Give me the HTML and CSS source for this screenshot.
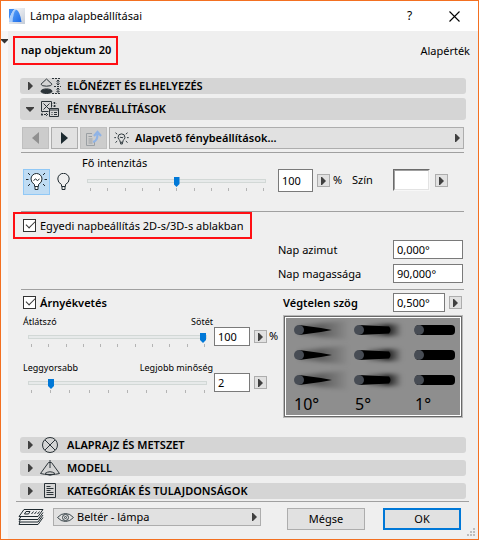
FILE: index.html
```html
<!DOCTYPE html>
<html lang="hu">
<head>
    <meta charset="UTF-8">
    <meta name="viewport" content="width=device-width, initial-scale=1.0">
    <title>Lámpa alapbeállításai</title>
    <link rel="stylesheet" href="styles.css">
</head>
<body>
    <div class="dialog">
        <header class="titlebar">
            <svg class="app-icon" width="16" height="16" viewBox="0 0 16 16">
                <defs>
                    <linearGradient id="sheet" x1="0" y1="0" x2="1" y2="1">
                        <stop offset="0" stop-color="#ffffff"/>
                        <stop offset="1" stop-color="#c4ccd8"/>
                    </linearGradient>
                    <linearGradient id="sail" x1="0" y1="0" x2="1" y2="1">
                        <stop offset="0" stop-color="#5aa2f8"/>
                        <stop offset="1" stop-color="#1c6be8"/>
                    </linearGradient>
                </defs>
                <rect width="16" height="16" fill="url(#sheet)"/>
                <path d="M0 1h5.500Q2 5 0 12z" fill="#3d8af2"/>
                <path d="M0 14Q1.500 5 5.500 1q1 0 1.500 1Q4 7 3.500 14z" fill="#a9cdfb"/>
                <path d="M3.500 14Q4 5 7 1.500 11 3 12.500 14z" fill="url(#sail)"/>
            </svg>
            <h1>Lámpa alapbeállításai</h1>
            <button type="button" class="title-btn" aria-label="Súgó">?</button>
            <button type="button" class="title-btn" aria-label="Bezárás">
                <svg width="11" height="11" viewBox="0 0 11 11"><path d="M.5.5l10 10M10.500.5l-10 10" stroke="#000" stroke-width="1.100"/></svg>
            </button>
        </header>

        <form class="body">
            <svg class="fold" width="7" height="5" viewBox="0 0 7 5"><path d="M0 0h7v1L3.500 4.500 0 1z" fill="#333"/></svg>

            <div class="object-head">
                <strong class="object-name marked">nap objektum 20</strong>
                <span>Alapérték</span>
            </div>

            <div class="panels">
                <button type="button" class="panel-bar">
                    <svg class="arrow" width="5" height="8" viewBox="0 0 5 8"><path d="M0 0h1l4 4-4 4H0z"/></svg>
                    <svg class="panel-icon" width="22" height="16" viewBox="0 0 22 16" fill="none" stroke="#2b3338">
                        <path d="M6.500 1L1 6.200q0 2 5.500 2t5.500-2z"/>
                        <ellipse cx="6.500" cy="13.200" rx="5.500" ry="2.300" fill="#2b3338"/>
                        <path d="M12 .5h9M14 8.500h7M12 15.500h9" stroke-dasharray="2 1"/>
                        <path d="M18 2v5M18 10v4M16.500 3.500L18 2l1.500 1.500M16.500 5.500L18 7l1.500-1.500M16.500 11.500L18 10l1.500 1.500M16.500 13L18 14.500l1.500-1.500"/>
                    </svg>
                    <span>ELŐNÉZET ÉS ELHELYEZÉS</span>
                </button>

                <button type="button" class="panel-bar open" aria-expanded="true">
                    <svg class="arrow down" width="8" height="5" viewBox="0 0 8 5"><path d="M0 0h8v1L4 5 0 1z"/></svg>
                    <svg class="panel-icon" width="22" height="17" viewBox="0 0 22 17" fill="none" stroke="#2b3338">
                        <path d="M11.500 6.500v-6h-10v10h7M3.500 2.500l6 6M9.500 2.500l-6 6"/>
                        <path d="M14.500 1v5M13 2.500L14.500 1 16 2.500M13 4.500L14.500 6 16 4.500M1 13.500h7M2.500 12L1 13.500 2.500 15M6 12l1.500 1.500L6 15" stroke-dasharray="2 1"/>
                        <path d="M9.500 7.500h9v8h-9zM9.500 9h9M11.500 11.500h1M14 11.500h3M11.500 13.500h1M14 13.500h3"/>
                    </svg>
                    <span>FÉNYBEÁLLÍTÁSOK</span>
                </button>

                <div class="settings">
                    <div class="toolbar">
                        <button type="button" class="tool" disabled aria-label="Előző oldal">
                            <svg width="7" height="12" viewBox="0 0 7 12"><path d="M7 0v12L0 6z" fill="#909090"/></svg>
                        </button>
                        <button type="button" class="tool" aria-label="Következő oldal">
                            <svg width="7" height="12" viewBox="0 0 7 12"><path d="M0 0v12l7-6z" fill="#1c2a30"/></svg>
                        </button>
                        <button type="button" class="tool" disabled aria-label="Oldal megnyitása">
                            <svg width="17" height="16" viewBox="0 0 17 16" fill="none">
                                <path d="M7 3.500H1.500v12h8V11M3.500 6.500H7M3.500 9h4M3.500 11h4M3.500 13h4" stroke="#9a9fa3"/>
                                <path d="M8 12q4.500-1 4.500-8M9 6l3.500-4L16 6" stroke="#8fb3e6" stroke-width="2.200"/>
                            </svg>
                        </button>
                        <div class="picker page-picker">
                            <svg class="picker-icon" width="17" height="15" viewBox="0 0 27 26" fill="none" stroke="#1f2a30" stroke-width="1.600">
                                <path d="M11 19.500v-3q-3.500-2-3.500-5.500a6 6 0 0 1 12 0q0 3.500-3.500 5.500v3zM12 20v2.500h3V20M10.500 12l2-1.500 2 1.500 2-1.500M1 11.500h3M23 11.500h3M3 3l3 2.500M24 3l-3 2.500M3 20l3-2.500M24 20l-3-2.500"/>
                            </svg>
                            <select aria-label="Beállítási oldal">
                                <option>Alapvető fénybeállítások...</option>
                            </select>
                            <svg class="arrow" width="5" height="8" viewBox="0 0 5 8"><path d="M0 0h1l4 4-4 4H0z"/></svg>
                        </div>
                    </div>

                    <div class="group intensity">
                        <button type="button" class="bulb on" aria-pressed="true" aria-label="Világítás be">
                            <svg width="21" height="20" viewBox="0 0 21 20" fill="none" stroke="#1f2a30">
                                <path fill="#fff" d="M8.500 14.500v-2Q5 10.500 5 7a5.500 5.500 0 0 1 11 0q0 3.500-3.500 5.500v2zM9 15v2.500h3V15"/>
                                <path d="M7.500 8.500l2-1.500 2 1.500 2-1.500M0 7.500h2.500M18.500 7.500H21M2 1l2 2M19 1l-2 2M2 14l2-2M19 14l-2-2"/>
                            </svg>
                        </button>
                        <button type="button" class="bulb" aria-pressed="false" aria-label="Világítás ki">
                            <svg width="13" height="18" viewBox="0 0 13 18" fill="none" stroke="#1f2a30">
                                <path d="M4.500 13.500v-2Q.8 9.500.8 6a5.700 5.700 0 0 1 11.400 0q0 3.500-3.700 5.500v2zM5 14v2.500h3V14"/>
                            </svg>
                        </button>
                        <div class="slider-col">
                            <label for="intensity">Fő intenzitás</label>
                            <input type="range" id="intensity" min="0" max="200" value="100">
                            <div class="ticks"><i></i><i></i><i></i><i></i><i></i><i></i><i></i><i></i><i></i><i></i><i></i></div>
                        </div>
                        <input type="text" class="field tall" value="100" aria-label="Fő intenzitás értéke">
                        <button type="button" class="more" aria-label="Egység"><svg class="arrow" width="5" height="8" viewBox="0 0 5 8"><path d="M0 0h1l4 4-4 4H0z"/></svg></button>
                        <span class="unit">%</span>
                        <label class="color-label" for="lampcolor">Szín</label>
                        <input type="color" id="lampcolor" class="swatch" value="#ffffff">
                        <button type="button" class="more" aria-label="Szín választása"><svg class="arrow" width="5" height="8" viewBox="0 0 5 8"><path d="M0 0h1l4 4-4 4H0z"/></svg></button>
                    </div>

                    <div class="group sun">
                        <label class="check marked"><input type="checkbox" checked>Egyedi napbeállítás 2D-s/3D-s ablakban</label>
                        <div class="sun-fields">
                            <label for="azimuth">Nap azimut</label>
                            <input type="text" class="field" id="azimuth" value="0,000°">
                            <label for="altitude">Nap magassága</label>
                            <input type="text" class="field" id="altitude" value="90,000°">
                        </div>
                    </div>

                    <div class="group shadow">
                        <div class="shadow-left">
                            <label class="check bold"><input type="checkbox" checked>Árnyékvetés</label>
                            <div class="level">
                                <div class="level-slider">
                                    <div class="ends"><span>Átlátszó</span><span>Sötét</span></div>
                                    <input type="range" min="0" max="100" value="100" aria-label="Árnyék sötétsége">
                                    <div class="ticks"><i></i><i></i><i></i><i></i><i></i><i></i><i></i><i></i><i></i><i></i><i></i></div>
                                </div>
                                <input type="text" class="field" value="100" aria-label="Árnyék sötétsége százalékban">
                                <button type="button" class="more" aria-label="Egység"><svg class="arrow" width="5" height="8" viewBox="0 0 5 8"><path d="M0 0h1l4 4-4 4H0z"/></svg></button>
                                <span class="unit">%</span>
                            </div>
                            <div class="level">
                                <div class="level-slider">
                                    <div class="ends"><span>Leggyorsabb</span><span>Legjobb minőség</span></div>
                                    <input type="range" min="1" max="10" value="2" aria-label="Árnyék minősége">
                                    <div class="ticks"><i></i><i></i><i></i><i></i><i></i><i></i><i></i><i></i><i></i><i></i></div>
                                </div>
                                <input type="text" class="field" value="2" aria-label="Árnyék minőségének értéke">
                                <button type="button" class="more" aria-label="Egység"><svg class="arrow" width="5" height="8" viewBox="0 0 5 8"><path d="M0 0h1l4 4-4 4H0z"/></svg></button>
                                <span class="unit"></span>
                            </div>
                        </div>

                        <div class="shadow-right">
                            <div class="angle">
                                <label for="angle">Végtelen szög</label>
                                <input type="text" class="field" id="angle" value="0,500°">
                                <button type="button" class="more" aria-label="Szög választása"><svg class="arrow" width="5" height="8" viewBox="0 0 5 8"><path d="M0 0h1l4 4-4 4H0z"/></svg></button>
                            </div>
                            <div class="preview">
                                <svg viewBox="0 0 174 97" role="img" aria-label="Árnyék 10, 5 és 1 fokos szögnél">
                                    <defs>
                                        <linearGradient id="fan">
                                            <stop offset="0" stop-color="#000" stop-opacity=".3"/>
                                            <stop offset=".45" stop-color="#000" stop-opacity=".35"/>
                                            <stop offset="1" stop-color="#000" stop-opacity="0"/>
                                        </linearGradient>
                                        <linearGradient id="tail">
                                            <stop offset="0" stop-color="#000" stop-opacity=".2"/>
                                            <stop offset=".6" stop-color="#000" stop-opacity=".8"/>
                                            <stop offset="1" stop-color="#000" stop-opacity="0"/>
                                        </linearGradient>
                                        <filter id="soft" x="-20%" y="-60%" width="140%" height="220%"><feGaussianBlur stdDeviation="2"/></filter>
                                        <filter id="edge" x="-20%" y="-60%" width="140%" height="220%"><feGaussianBlur stdDeviation=".6"/></filter>
                                        <g id="s10">
                                            <path d="M0-4L50-10V10L0 4z" fill="url(#fan)" filter="url(#soft)"/>
                                            <path d="M0-5L22-2 33 0 22 2 0 5z" filter="url(#edge)"/>
                                            <circle r="5" fill="#474c54"/>
                                        </g>
                                        <g id="s5">
                                            <path d="M8-5L43-6V6L8 5z" fill="url(#tail)" filter="url(#soft)"/>
                                            <path d="M0-5L30-3.500Q33 0 30 3.500L0 5z" filter="url(#edge)"/>
                                            <circle r="5" fill="#474c54"/>
                                        </g>
                                        <g id="s1">
                                            <rect x="-4" y="-5" width="40" height="10" rx="4" filter="url(#edge)"/>
                                            <circle r="5" fill="#474c54"/>
                                        </g>
                                    </defs>
                                    <rect width="174" height="97" fill="#8e8e8e"/>
                                    <use href="#s10" x="13" y="12"/><use href="#s10" x="13" y="37"/><use href="#s10" x="13" y="62"/>
                                    <use href="#s5" x="73" y="12"/><use href="#s5" x="73" y="37"/><use href="#s5" x="73" y="62"/>
                                    <use href="#s1" x="133" y="12"/><use href="#s1" x="133" y="37"/><use href="#s1" x="133" y="62"/>
                                    <text x="8" y="92">10°</text>
                                    <text x="69" y="92">5°</text>
                                    <text x="129" y="92">1°</text>
                                </svg>
                            </div>
                        </div>
                    </div>
                </div>

                <div class="closed-panels">
                    <button type="button" class="panel-bar">
                        <svg class="arrow" width="5" height="8" viewBox="0 0 5 8"><path d="M0 0h1l4 4-4 4H0z"/></svg>
                        <svg class="panel-icon" width="22" height="16" viewBox="0 0 22 16" fill="none" stroke="#2b3338">
                            <circle cx="10" cy="8" r="7.500"/><path d="M5 3l10 10M15 3L5 13"/>
                        </svg>
                        <span>ALAPRAJZ ÉS METSZET</span>
                    </button>
                    <button type="button" class="panel-bar">
                        <svg class="arrow" width="5" height="8" viewBox="0 0 5 8"><path d="M0 0h1l4 4-4 4H0z"/></svg>
                        <svg class="panel-icon" width="22" height="16" viewBox="0 0 22 16" fill="none" stroke="#2b3338">
                            <path d="M10 0v3M8.500 2.500h3L19.500 13.500q-3 1-9.500 1t-9.500-1zM10 3v5M5 13.500q5-3.500 10 0M5 14q5 2.500 10 0"/>
                        </svg>
                        <span>MODELL</span>
                    </button>
                    <button type="button" class="panel-bar">
                        <svg class="arrow" width="5" height="8" viewBox="0 0 5 8"><path d="M0 0h1l4 4-4 4H0z"/></svg>
                        <svg class="panel-icon" width="22" height="16" viewBox="0 0 22 16" fill="none" stroke="#2b3338">
                            <path d="M4.500.5h11v14h-11zM6.500 3.500h4M6.500 5.500h7M6.500 7.500h4M6.500 9.500h7M6.500 11.500h7"/>
                        </svg>
                        <span>KATEGÓRIÁK ÉS TULAJDONSÁGOK</span>
                    </button>
                </div>
            </div>

            <footer class="footer">
                <svg class="layers" width="26" height="16" viewBox="0 0 26 16" fill="none" stroke="#1f2a30">
                    <path d="M6 .5h19l-5 7H1zM3 7.500L1 10.500h19l5-7M2.500 10.500L1 13h19l5-7M2 13l-1 2.500h19l5-7"/>
                    <path d="M8 2.500h4l-1.500 2.500h-4zM15.500 2.500l-2 2.500M18.500 2.500l-2 2.500M21.500 2.500l-2 2.500"/>
                </svg>
                <div class="picker layer-picker">
                    <svg class="picker-icon" width="17" height="9" viewBox="0 0 17 9" fill="none" stroke="#3b464b">
                        <path d="M.5 4.500Q4 .5 8.500.5t8 4q-3.500 4-8 4t-8-4z"/><circle cx="8.500" cy="4.500" r="3"/><circle cx="8.500" cy="4.500" r="1"/>
                    </svg>
                    <select aria-label="Fólia">
                        <option>Beltér - lámpa</option>
                    </select>
                    <svg class="arrow" width="5" height="8" viewBox="0 0 5 8"><path d="M0 0h1l4 4-4 4H0z"/></svg>
                </div>
                <button type="button" class="btn">Mégse</button>
                <button type="submit" class="btn primary">OK</button>
            </footer>

            <svg class="grip" width="8" height="8" viewBox="0 0 8 8"><path d="M6 0h2v2H6zM3 3h2v2H3zM6 3h2v2H6zM0 6h2v2H0zM3 6h2v2H3zM6 6h2v2H6z" fill="#bdbdbd"/></svg>
        </form>
    </div>
</body>
</html>
```
FILE: styles.css
```css
* {
    margin: 0;
    padding: 0;
    box-sizing: border-box;
}

body {
    font-family: "Noto Sans", "Open Sans", sans-serif;
    font-size: 11px;
    line-height: 16px;
    color: #000;
    background: #efefef;
}

button,
input,
select {
    font: inherit;
    color: inherit;
    border-radius: 0;
}

svg {
    display: block;
    flex: none;
}

.dialog {
    display: flex;
    flex-direction: column;
    min-height: 100vh;
    border: 1px solid #f37021;
}

/* Title bar */
.titlebar {
    display: flex;
    align-items: center;
    height: 30px;
    padding: 0 1px 0 8px;
    background: #fff;
}

.titlebar h1 {
    flex: 1;
    margin-left: 5px;
    font-size: 11px;
    font-weight: 400;
}

.title-btn {
    display: flex;
    align-items: center;
    justify-content: center;
    width: 45px;
    height: 30px;
    border: none;
    background: none;
    font-size: 12px;
}

/* Body */
.body {
    position: relative;
    flex: 1;
    border-left: 7px solid #f7f7f7;
    background: #efefef;
}

.fold {
    position: absolute;
    top: 8px;
    left: -7px;
}

.marked {
    border: 2px solid #ff0f14;
}

.object-head {
    display: flex;
    align-items: center;
    justify-content: space-between;
    margin: 5px 8px 13px 5px;
}

.object-name {
    padding: 4px 5px 5px 6px;
    font-weight: 600;
}

.panels {
    padding: 0 12px;
}

.panel-bar {
    display: flex;
    align-items: center;
    width: 100%;
    height: 16px;
    margin-bottom: 4px;
    padding-left: 8px;
    border: none;
    border-radius: 3px;
    background: #d5d5d5;
    font-weight: 600;
    text-align: left;
}

.panel-bar.open {
    height: 22px;
    margin-bottom: 7px;
}

.panel-bar .panel-icon {
    margin: 0 5px 0 7px;
}

.arrow {
    fill: #404040;
}

.panel-bar .arrow {
    width: 5px;
}

.panel-bar .arrow.down {
    width: 8px;
    margin: 0 -1px 0 -2px;
}

.settings {
    padding: 0 2px 0 1px;
}

/* Page toolbar */
.toolbar {
    display: flex;
    gap: 2px;
    margin: 0 0 3px 1px;
}

.tool {
    display: flex;
    align-items: center;
    justify-content: center;
    width: 27px;
    height: 22px;
    border: 1px solid #adadad;
    background: #e1e1e1;
}

.tool:disabled {
    border-color: #bfbfbf;
    background: #cccccc;
}

.picker {
    position: relative;
    flex: 1;
}

.picker select {
    display: block;
    width: 100%;
    height: 22px;
    border: 1px solid #adadad;
    background: #e1e1e1;
    appearance: none;
}

.picker-icon,
.picker .arrow {
    position: absolute;
    top: 0;
    bottom: 0;
    left: 4px;
    margin: auto 0;
    pointer-events: none;
}

.picker .arrow {
    left: auto;
    right: 4px;
}

.page-picker select {
    padding-left: 25px;
    font-weight: 600;
}

/* Setting groups */
.group {
    border-top: 1px solid #a0a0a0;
}

.field {
    height: 19px;
    padding: 0 3px;
    border: 1px solid #7a7a7a;
    background: #fff;
}

.field.tall {
    width: 35px;
    height: 23px;
}

.more {
    display: flex;
    align-items: center;
    justify-content: center;
    width: 13px;
    height: 13px;
    border: 1px solid #adadad;
    background: #e1e1e1;
}

input[type="range"] {
    display: block;
    height: 10px;
    background: none;
    appearance: none;
}

input[type="range"]::-webkit-slider-runnable-track {
    height: 4px;
    border: 1px solid #d2d8d6;
    background: #e7eaea;
}

input[type="range"]::-webkit-slider-thumb {
    width: 6px;
    height: 10px;
    margin-top: -3px;
    background: #0078d7;
    clip-path: polygon(0 0, 100% 0, 100% 70%, 50% 100%, 0 70%);
    appearance: none;
}

.ticks {
    display: flex;
    justify-content: space-between;
    padding: 0 2px 0 3px;
}

.ticks i {
    width: 1px;
    height: 3px;
    background: #b4b4b4;
}

.intensity {
    display: flex;
    align-items: flex-start;
    height: 59px;
    padding: 16px 0 0 2px;
}

.bulb {
    display: flex;
    align-items: center;
    justify-content: center;
    width: 27px;
    height: 26px;
    border: 1px solid transparent;
    background: none;
}

.bulb.on {
    border-color: #90c8f6;
    background: #c0dcf3;
}

.slider-col {
    flex: 1;
    margin: -14px 12px 0 10px;
}

.slider-col label {
    display: block;
    margin-left: -5px;
}

.slider-col input {
    width: 100%;
    margin: 5px 0 2px;
}

.intensity .more {
    margin: 5px 0 0 4px;
}

.unit {
    width: 14px;
    margin-left: 3px;
}

.intensity .unit,
.color-label {
    margin-top: 3px;
}

.color-label {
    width: 41px;
    margin-left: 5px;
}

.swatch {
    width: 37px;
    height: 22px;
    border: 1px solid;
    border-color: #6b6b6b #f7f7f7 #f7f7f7 #6b6b6b;
    background: #fff;
    appearance: none;
}

.swatch::-webkit-color-swatch-wrapper {
    padding: 0;
}

.swatch::-webkit-color-swatch {
    border: 1px solid;
    border-color: #a0a0a0 #e3e3e3 #e3e3e3 #a0a0a0;
}

.intensity .swatch + .more {
    margin: 5px 16px 0 5px;
}

.check {
    display: flex;
    align-items: center;
    gap: 4px;
}

.check input {
    position: relative;
    width: 13px;
    height: 13px;
    border: 1px solid #333;
    background: #fff;
    appearance: none;
}

.check input:checked::after {
    content: "";
    position: absolute;
    left: 2px;
    top: 1px;
    width: 8px;
    height: 4px;
    border: solid #333;
    border-width: 0 0 1px 1px;
    transform: rotate(-45deg);
}

.bold {
    font-weight: 600;
}

/* Sun */
.sun .check {
    width: fit-content;
    height: 27px;
    margin-left: -8px;
    padding: 0 6px 0 8px;
}

.sun-fields {
    display: grid;
    grid-template-columns: 115px 70px;
    justify-content: end;
    align-items: center;
    gap: 5px 0;
    padding: 1px 1px 6px 0;
}

.sun-fields .field {
    width: 100%;
}

/* Shadow */
.shadow {
    display: flex;
    padding: 3px 1px 19px 2px;
}

.shadow-left {
    flex: 1;
    display: flex;
    flex-direction: column;
}

.shadow-left .check {
    height: 19px;
    margin-bottom: 3px;
}

.level {
    display: flex;
    align-items: flex-start;
    height: 46px;
}

.level-slider {
    flex: 1;
    margin-right: 1px;
}

.level-slider input {
    width: calc(100% - 11px);
    margin: 4px 6px 2px 5px;
}

.level-slider .ticks {
    margin: 0 6px 0 5px;
}

.ends {
    display: flex;
    justify-content: space-between;
    font-size: 9px;
    line-height: 13px;
}

.level .field {
    width: 36px;
    margin-top: 12px;
}

.level .more {
    margin: 15px 0 0 4px;
}

.level .unit {
    margin: 13px 0 0 2px;
}

.shadow-right {
    width: 180px;
}

.angle {
    display: flex;
    align-items: center;
    margin-bottom: 3px;
}

.angle label {
    flex: 1;
    font-weight: 600;
}

.angle .field {
    width: 52px;
}

.angle .more {
    margin: 0 1px 0 4px;
}

.preview {
    padding: 1px;
    border: 1px solid #b9b9b9;
    background: #696969;
}

.preview svg {
    width: 100%;
    height: auto;
    border: 1px solid #fff;
}

.preview text {
    font-size: 16px;
}

.closed-panels .panel-bar {
    margin-bottom: 7px;
}

.closed-panels .panel-bar:last-child {
    margin-bottom: 2px;
}

/* Footer */
.footer {
    display: flex;
    align-items: flex-start;
    margin: 0 9px 0 8px;
    padding: 6px 8px 9px 2px;
    border-top: 1px solid #a0a0a0;
}

.layers {
    margin-top: 1px;
}

.layer-picker {
    margin: 0 26px 0 9px;
}

.layer-picker select {
    height: 18px;
    padding-left: 23px;
}

.btn {
    width: 78px;
    height: 22px;
    border: 1px solid #adadad;
    background: #e1e1e1;
}

.btn + .btn {
    margin-left: 18px;
}

.btn.primary {
    border: 2px solid #0078d7;
}

.grip {
    position: absolute;
    right: 3px;
    bottom: 3px;
}
```
